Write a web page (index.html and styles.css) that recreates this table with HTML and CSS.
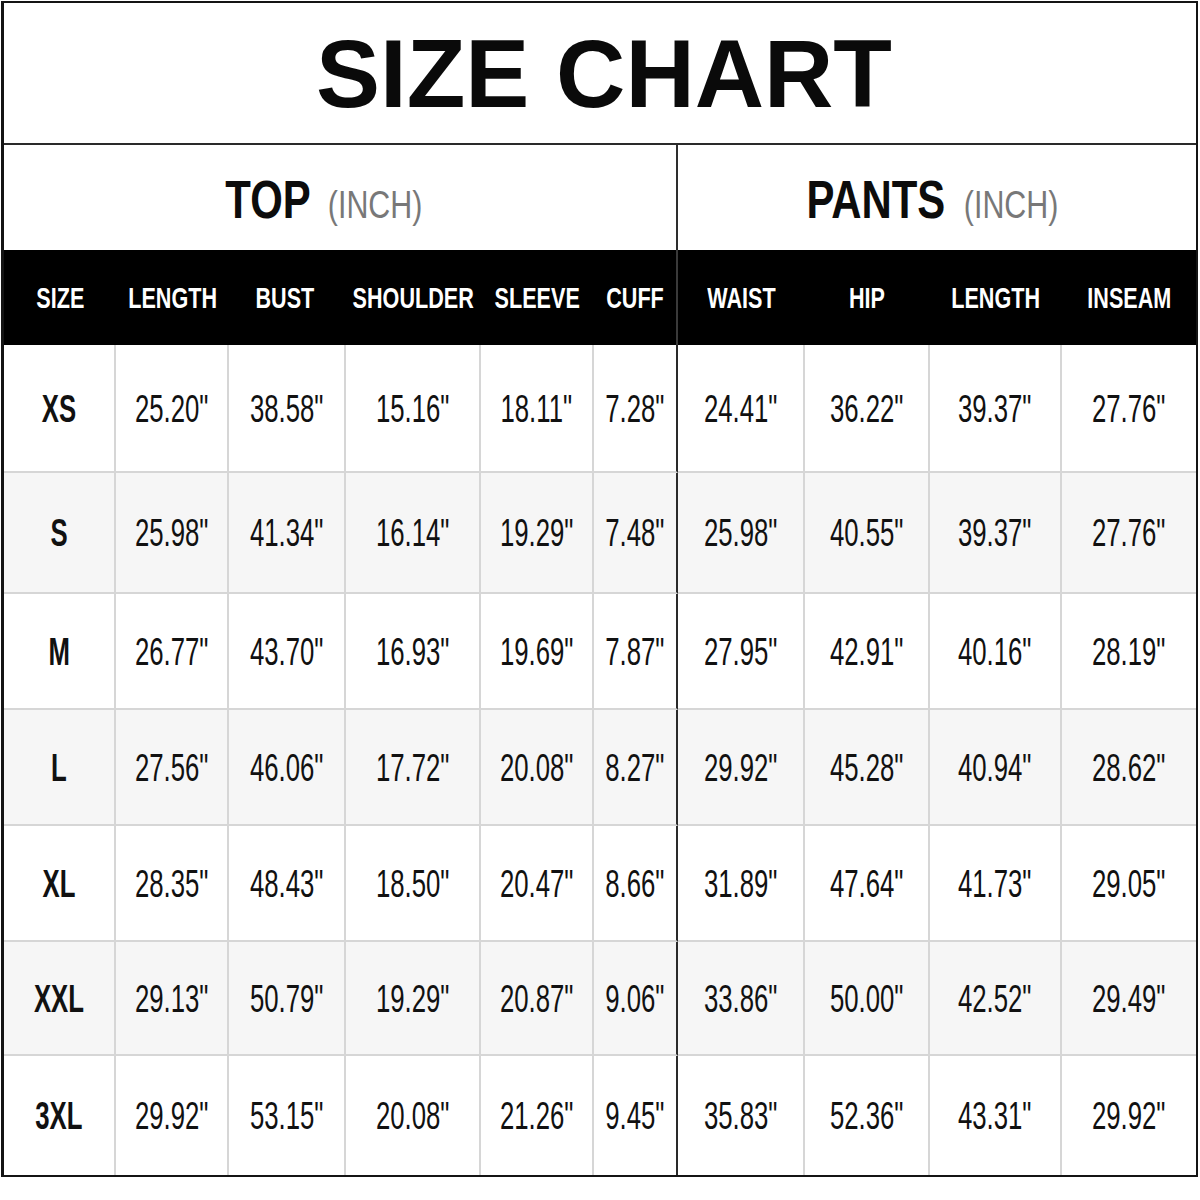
FILE: index.html
```html
<!DOCTYPE html>
<html>
<head>
<meta charset="utf-8">
<link rel="stylesheet" href="styles.css">
</head>
<body>
<div class="chart">
  <div class="title"><h1>SIZE CHART</h1></div>
  <div class="sections">
    <div class="sec sec-top"><span class="sec-name">TOP</span><span class="sec-unit">(INCH)</span></div>
    <div class="sec sec-pants"><span class="sec-name">PANTS</span><span class="sec-unit">(INCH)</span></div>
  </div>
  <div class="grid">
    <div class="row head">
      <div class="c"><span class="t">SIZE</span></div>
      <div class="c"><span class="t">LENGTH</span></div>
      <div class="c bust"><span class="t">BUST</span></div>
      <div class="c"><span class="t">SHOULDER</span></div>
      <div class="c"><span class="t">SLEEVE</span></div>
      <div class="c cuff"><span class="t">CUFF</span></div>
      <div class="c"><span class="t">WAIST</span></div>
      <div class="c"><span class="t">HIP</span></div>
      <div class="c"><span class="t">LENGTH</span></div>
      <div class="c last"><span class="t">INSEAM</span></div>
    </div>
    <div class="row">
      <div class="c sz"><span class="t">XS</span></div>
      <div class="c"><span class="t">25.20"</span></div>
      <div class="c"><span class="t">38.58"</span></div>
      <div class="c"><span class="t">15.16"</span></div>
      <div class="c"><span class="t">18.11"</span></div>
      <div class="c cuff"><span class="t">7.28"</span></div>
      <div class="c"><span class="t">24.41"</span></div>
      <div class="c"><span class="t">36.22"</span></div>
      <div class="c"><span class="t">39.37"</span></div>
      <div class="c last"><span class="t">27.76"</span></div>
    </div>
    <div class="row alt">
      <div class="c sz"><span class="t">S</span></div>
      <div class="c"><span class="t">25.98"</span></div>
      <div class="c"><span class="t">41.34"</span></div>
      <div class="c"><span class="t">16.14"</span></div>
      <div class="c"><span class="t">19.29"</span></div>
      <div class="c cuff"><span class="t">7.48"</span></div>
      <div class="c"><span class="t">25.98"</span></div>
      <div class="c"><span class="t">40.55"</span></div>
      <div class="c"><span class="t">39.37"</span></div>
      <div class="c last"><span class="t">27.76"</span></div>
    </div>
    <div class="row">
      <div class="c sz"><span class="t">M</span></div>
      <div class="c"><span class="t">26.77"</span></div>
      <div class="c"><span class="t">43.70"</span></div>
      <div class="c"><span class="t">16.93"</span></div>
      <div class="c"><span class="t">19.69"</span></div>
      <div class="c cuff"><span class="t">7.87"</span></div>
      <div class="c"><span class="t">27.95"</span></div>
      <div class="c"><span class="t">42.91"</span></div>
      <div class="c"><span class="t">40.16"</span></div>
      <div class="c last"><span class="t">28.19"</span></div>
    </div>
    <div class="row alt">
      <div class="c sz"><span class="t">L</span></div>
      <div class="c"><span class="t">27.56"</span></div>
      <div class="c"><span class="t">46.06"</span></div>
      <div class="c"><span class="t">17.72"</span></div>
      <div class="c"><span class="t">20.08"</span></div>
      <div class="c cuff"><span class="t">8.27"</span></div>
      <div class="c"><span class="t">29.92"</span></div>
      <div class="c"><span class="t">45.28"</span></div>
      <div class="c"><span class="t">40.94"</span></div>
      <div class="c last"><span class="t">28.62"</span></div>
    </div>
    <div class="row">
      <div class="c sz"><span class="t">XL</span></div>
      <div class="c"><span class="t">28.35"</span></div>
      <div class="c"><span class="t">48.43"</span></div>
      <div class="c"><span class="t">18.50"</span></div>
      <div class="c"><span class="t">20.47"</span></div>
      <div class="c cuff"><span class="t">8.66"</span></div>
      <div class="c"><span class="t">31.89"</span></div>
      <div class="c"><span class="t">47.64"</span></div>
      <div class="c"><span class="t">41.73"</span></div>
      <div class="c last"><span class="t">29.05"</span></div>
    </div>
    <div class="row alt">
      <div class="c sz"><span class="t">XXL</span></div>
      <div class="c"><span class="t">29.13"</span></div>
      <div class="c"><span class="t">50.79"</span></div>
      <div class="c"><span class="t">19.29"</span></div>
      <div class="c"><span class="t">20.87"</span></div>
      <div class="c cuff"><span class="t">9.06"</span></div>
      <div class="c"><span class="t">33.86"</span></div>
      <div class="c"><span class="t">50.00"</span></div>
      <div class="c"><span class="t">42.52"</span></div>
      <div class="c last"><span class="t">29.49"</span></div>
    </div>
    <div class="row end">
      <div class="c sz"><span class="t">3XL</span></div>
      <div class="c"><span class="t">29.92"</span></div>
      <div class="c"><span class="t">53.15"</span></div>
      <div class="c"><span class="t">20.08"</span></div>
      <div class="c"><span class="t">21.26"</span></div>
      <div class="c cuff"><span class="t">9.45"</span></div>
      <div class="c"><span class="t">35.83"</span></div>
      <div class="c"><span class="t">52.36"</span></div>
      <div class="c"><span class="t">43.31"</span></div>
      <div class="c last"><span class="t">29.92"</span></div>
    </div>
  </div>
</div>
</body>
</html>
```
FILE: styles.css
```css
* { box-sizing: border-box; }
html, body { margin: 0; padding: 0; background: #fff; }
body { font-family: "Liberation Sans", Arial, sans-serif; color: #111; }

.chart {
  width: 1197px;
  margin: 1px 0 0 1px;
  border: 2px solid #141414;
  border-left-width: 3px;
  background: #fff;
}

.title {
  height: 142px;
  border-bottom: 2px solid #2a2a2a;
  display: flex;
  align-items: center;
  justify-content: center;
}
.title h1 {
  margin: 0;
  font-family: "Liberation Sans", Arial, sans-serif;
  font-weight: 700;
  font-size: 96px;
  line-height: 1;
  color: #0a0a0a;
  letter-spacing: 0px;
  padding-top: 2px;
  padding-left: 8px;
}

.sections {
  display: flex;
  height: 105px;
}
.sec {
  display: flex;
  align-items: center;
  justify-content: center;
  gap: 4px;
  padding-top: 4px;
}
.sec-top { width: 674px; border-right: 2px solid #2e2e2e; padding-right: 32px; }
.sec-pants { flex: 1; padding-right: 16px; }
.sec-name {
  display: inline-block;
  font-weight: 700;
  font-size: 53px;
  line-height: 1;
  color: #0c0c0c;
  transform: scaleX(0.79);
}
.sec-unit {
  display: inline-block;
  font-weight: 400;
  font-size: 38px;
  line-height: 1;
  color: #787878;
  transform: scaleX(0.8);
  margin-top: 10px;
}
.sec-top .sec-name { margin-right: -10px; }
.sec-pants .sec-name { margin-right: -16px; }

.grid {
  display: grid;
  grid-template-columns: 112px 113px 117px 135px 113px 84px 127px 125px 132px 134px;
  grid-template-rows: 95px 128px 121px 116px 116px 116px 114px 119px;
}
.row { display: contents; }

.c {
  display: flex;
  align-items: center;
  justify-content: center;
  border-right: 2px solid #d6d6d6;
  border-bottom: 2px solid #d6d6d6;
  background: #fff;
  overflow: visible;
  white-space: nowrap;
}
.c.cuff { border-right-color: #2a2a2a; }
.c.last { border-right: none; }
.row.alt > .c { background: #f6f6f6; }
.row.end > .c { border-bottom: none; }

.t {
  display: inline-block;
  font-weight: 400;
  font-size: 39px;
  line-height: 1;
  color: #111;
  transform: scaleX(0.66);
}
.sz .t { font-weight: 700; font-size: 39px; transform: scaleX(0.66); }

.row.head > .c {
  background: #000;
  border-right: none;
  border-bottom: none;
}
.row.head > .c.cuff { border-right: 2px solid #3a3a3a; }
.row.head > .c.bust { padding-right: 6px; }
.row.head .t {
  color: #fff;
  font-weight: 700;
  font-size: 30px;
  transform: scaleX(0.72);
}
```
